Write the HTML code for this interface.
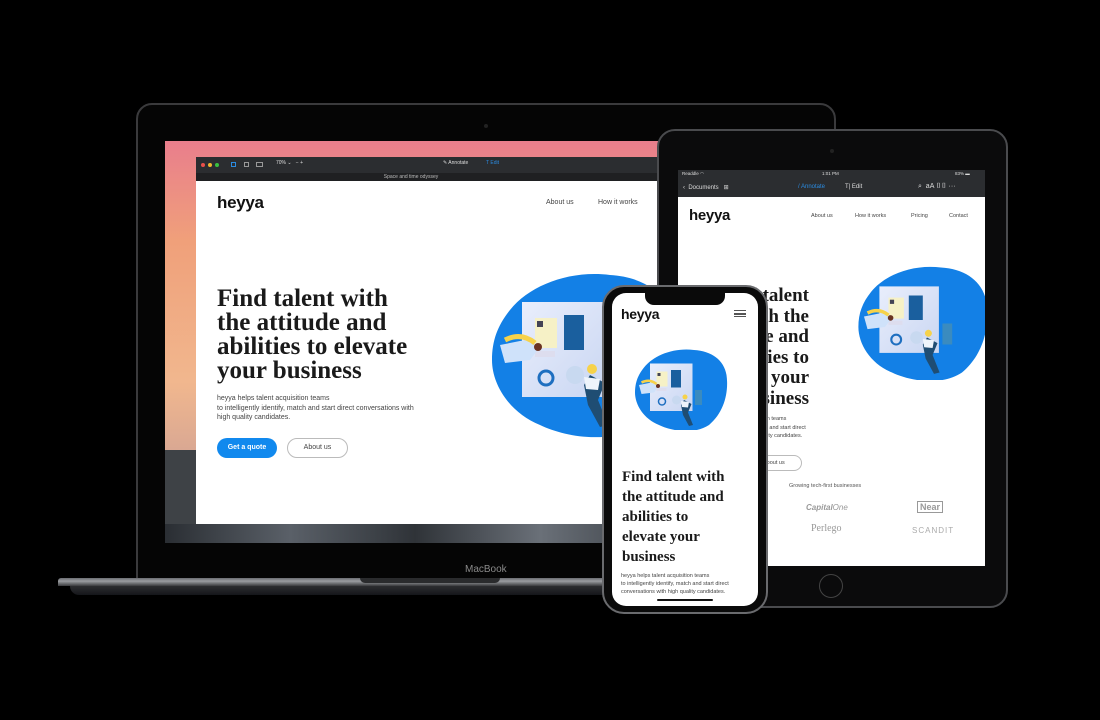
<!DOCTYPE html>
<html><head><meta charset="utf-8">
<style>
*{margin:0;padding:0;box-sizing:border-box}
body{width:1100px;height:720px;background:#000;position:relative;overflow:hidden;font-family:"Liberation Sans",sans-serif}
.a{position:absolute}
.serif{font-family:"Liberation Serif",serif;font-weight:bold;color:#1a1a1a}
.logo{font-family:"Liberation Sans",sans-serif;font-weight:bold;color:#111;letter-spacing:-0.3px}
.nav{font-size:7px;color:#444}
svg{display:block}
</style></head><body>
<svg width="0" height="0" style="position:absolute">
<defs>
<linearGradient id="pg" x1="0" y1="0" x2="1" y2="1"><stop offset="0" stop-color="#e9eefc"/><stop offset="1" stop-color="#c9d6f2"/></linearGradient>
<g id="ill">
<path d="M30 45 C50 20 90 5 130 10 C165 12 190 30 195 60 C200 95 190 135 160 160 C130 180 85 172 60 160 C30 148 12 120 12 95 C12 75 18 60 30 45Z" fill="#1380e6"/>
<rect x="42" y="37" width="85" height="95" fill="url(#pg)"/>
<rect x="55" y="53" width="22" height="30" fill="#f6f1c6"/>
<rect x="57" y="56" width="6" height="6" fill="#445"/>
<rect x="84" y="50" width="20" height="35" fill="#1a5f9e"/>
<rect x="55" y="86" width="20" height="6" fill="#dde"/>
<circle cx="66" cy="113" r="7" fill="none" stroke="#1e6fc0" stroke-width="3"/>
<circle cx="95" cy="110" r="9" fill="#c8d9f0"/>
<rect x="132" y="90" width="14" height="30" fill="#3a8bbf"/>
<path d="M20 80 L45 75 L60 82 L50 95 L25 98Z" fill="#cfe2fa"/>
<path d="M25 75 C35 70 45 70 55 78" stroke="#f6d24a" stroke-width="5" fill="none"/>
<circle cx="58" cy="82" r="4" fill="#6a3322"/>
<path d="M110 110 L125 118 L118 135 L128 160 L120 162 L108 140 L104 120Z" fill="#1f4d73"/>
<circle cx="112" cy="104" r="5" fill="#f6d24a"/>
<path d="M104 112 L120 114 L118 125 L106 124Z" fill="#eef4fb"/>
</g>
</defs></svg>

<!-- Laptop lid -->
<div class="a" style="left:136px;top:103px;width:700px;height:478px;border-radius:16px 16px 0 0;border:2px solid #3a3a3c;background:#050505"></div>
<div class="a" style="left:484px;top:124px;width:4px;height:4px;border-radius:50%;background:#222"></div>
<!-- wallpaper -->
<div class="a" style="left:165px;top:141px;width:500px;height:402px;background:linear-gradient(180deg,#e97e8c 0%,#f0a07a 25%,#f1b78e 60%,#d8a793 78%,#30343a 80%,#454b52 100%)"></div>
<div class="a" style="left:165px;top:450px;width:32px;height:93px;background:#3e4246"></div>
<div class="a" style="left:165px;top:524px;width:500px;height:19px;background:linear-gradient(90deg,#2a2e33,#5a6068,#2f3338,#6a7078,#3a3f45)"></div>
<!-- app window -->
<div class="a" style="left:196px;top:157px;width:470px;height:16px;background:#2b2d30"></div>
<div class="a" style="left:196px;top:173px;width:470px;height:8px;background:#1f2022;color:#bbb;font-size:5px;text-align:center;line-height:8px;padding-right:40px">Space and time odyssey</div>
<div class="a" style="left:201px;top:163px;width:4px;height:4px;border-radius:50%;background:#e9504a"></div>
<div class="a" style="left:208px;top:163px;width:4px;height:4px;border-radius:50%;background:#f1b62e"></div>
<div class="a" style="left:215px;top:163px;width:4px;height:4px;border-radius:50%;background:#39c13f"></div>
<div class="a" style="left:231px;top:162px;width:5px;height:5px;border:1px solid #2b8be0"></div>
<div class="a" style="left:244px;top:162px;width:5px;height:5px;border:1px solid #999"></div>
<div class="a" style="left:256px;top:162px;width:7px;height:5px;border:1px solid #999"></div>
<div class="a" style="left:276px;top:160px;font-size:5px;color:#ddd">70% ⌄ &nbsp; − +</div>
<div class="a" style="left:443px;top:160px;font-size:5px;color:#ddd">✎ Annotate</div>
<div class="a" style="left:486px;top:160px;font-size:5px;color:#2b8be0">T Edit</div>
<div class="a" style="left:196px;top:181px;width:470px;height:343px;background:#fff"></div>
<div class="a logo" style="left:217px;top:193px;font-size:17px">heyya</div>
<div class="a nav" style="left:546px;top:199px">About us</div>
<div class="a nav" style="left:598px;top:199px">How it works</div>
<div class="a serif" style="left:217px;top:287px;font-size:25px;line-height:24px;white-space:nowrap">Find talent with<br>the attitude and<br>abilities to elevate<br>your business</div>
<div class="a" style="left:217px;top:394px;font-size:7px;line-height:9.5px;color:#444;white-space:nowrap">heyya helps talent acquisition teams<br>to intelligently identify, match and start direct conversations with<br>high quality candidates.</div>
<div class="a" style="left:217px;top:438px;width:60px;height:20px;border-radius:10px;background:#1189ee;color:#fff;font-size:7px;font-weight:bold;text-align:center;line-height:20px">Get a quote</div>
<div class="a" style="left:287px;top:438px;width:61px;height:20px;border-radius:10px;border:1px solid #bbb;color:#444;font-size:7px;text-align:center;line-height:18px">About us</div>
<svg class="a" style="left:480px;top:265px" width="186" height="180" viewBox="0 0 186 180"><use href="#ill"/></svg>
<!-- laptop base -->
<div class="a" style="left:58px;top:578px;width:900px;height:8px;background:linear-gradient(180deg,#6b6d72,#9a9ca0 40%,#3a3b3e);border-radius:3px 3px 0 0"></div>
<div class="a" style="left:360px;top:578px;width:140px;height:5px;background:#2a2b2d;border-radius:0 0 6px 6px"></div>
<div class="a" style="left:70px;top:586px;width:880px;height:9px;background:linear-gradient(180deg,#2c2d30,#15161a);border-radius:0 0 40px 40px"></div>
<div class="a" style="left:465px;top:564px;font-size:10px;color:#8a8a8a">MacBook</div>

<!-- iPad -->
<div class="a" style="left:657px;top:129px;width:351px;height:479px;border-radius:18px;background:#0b0b0c;border:2px solid #4a4b4e"></div>
<div class="a" style="left:830px;top:149px;width:4px;height:4px;border-radius:50%;background:#222"></div>
<div class="a" style="left:819px;top:574px;width:24px;height:24px;border-radius:50%;border:1.5px solid #444"></div>
<div class="a" style="left:678px;top:170px;width:307px;height:27px;background:#2b2d30"></div>
<div class="a" style="left:682px;top:171px;font-size:4.5px;color:#ddd">Readdle ◠</div>
<div class="a" style="left:822px;top:171px;font-size:4.5px;color:#ddd">1:01 PM</div>
<div class="a" style="left:955px;top:171px;font-size:4.5px;color:#ddd">83% ▬</div>
<div class="a" style="left:683px;top:184px;font-size:6px;color:#ddd">‹ &nbsp;Documents &nbsp;&nbsp;⊞</div>
<div class="a" style="left:798px;top:184px;font-size:6px;color:#2b8be0">/ Annotate</div>
<div class="a" style="left:845px;top:184px;font-size:6px;color:#ddd">T| Edit</div>
<div class="a" style="left:918px;top:183px;font-size:7px;color:#ddd">⌕ &nbsp;aA ▯▯ ···</div>
<div class="a" style="left:678px;top:197px;width:307px;height:369px;background:#fff;overflow:hidden">
 <div class="a logo" style="left:11px;top:10px;font-size:15px">heyya</div>
 <div class="a nav" style="left:133px;top:16px;font-size:5.5px">About us</div>
 <div class="a nav" style="left:177px;top:16px;font-size:5.5px">How it works</div>
 <div class="a nav" style="left:233px;top:16px;font-size:5.5px">Pricing</div>
 <div class="a nav" style="left:271px;top:16px;font-size:5.5px">Contact</div>
 <svg class="a" style="left:172px;top:63px" width="140" height="120" viewBox="0 0 200 170"><use href="#ill"/></svg>
 <div class="a serif" style="left:36px;top:89px;font-size:19px;line-height:20.5px;white-space:nowrap;text-align:right;width:95px;direction:rtl"><span style="direction:ltr;unicode-bidi:embed">Find talent<br>with the<br>attitude and<br>abilities to<br>elevate your<br>business</span></div>
 <div class="a" style="left:20px;top:218px;font-size:5.5px;line-height:8.5px;color:#444;white-space:nowrap">heyya helps talent acquisition teams<br>to intelligently identify, match and start direct<br>conversations with high quality candidates.</div>
 <div class="a" style="left:50px;top:258px;width:74px;height:16px;border-radius:8px;border:1px solid #bbb;font-size:5.5px;color:#444;line-height:14px;padding-left:34px">About us</div>
 <div class="a" style="left:111px;top:286px;font-size:5.5px;color:#555">Growing tech-first businesses</div>
 <div class="a" style="left:128px;top:306px;font-size:8px;font-style:italic;font-weight:bold;color:#999">Capital<i style="font-weight:normal">One</i></div>
 <div class="a" style="left:239px;top:304px;font-size:9px;font-weight:bold;color:#999;border:1px solid #999;padding:0 2px">Near</div>
 <div class="a" style="left:133px;top:326px;font-size:10px;font-family:'Liberation Serif',serif;color:#999">Perlego</div>
 <div class="a" style="left:234px;top:329px;font-size:8px;letter-spacing:1px;color:#aaa">SCANDIT</div>
</div>

<!-- Phone -->
<div class="a" style="left:602px;top:285px;width:166px;height:329px;border-radius:22px;background:#0a0a0a;border:2px solid #6a6b6e"></div>
<div class="a" style="left:612px;top:293px;width:146px;height:313px;border-radius:14px;background:#fff;overflow:hidden">
 <div class="a" style="left:33px;top:-1px;width:80px;height:13px;background:#0a0a0a;border-radius:0 0 9px 9px"></div>
 <div class="a logo" style="left:9px;top:13px;font-size:14px">heyya</div>
 <div class="a" style="left:122px;top:17px;width:12px;height:7px;border-top:1.5px solid #555;border-bottom:1.5px solid #555"></div>
 <div class="a" style="left:122px;top:20px;width:12px;height:1.5px;background:#555"></div>
 <svg class="a" style="left:17px;top:52px" width="100" height="85" viewBox="0 0 200 170"><use href="#ill"/></svg>
 <div class="a serif" style="left:10px;top:174px;font-size:15px;line-height:20px;white-space:nowrap">Find talent with<br>the attitude and<br>abilities to<br>elevate your<br>business</div>
 <div class="a" style="left:9px;top:279px;font-size:5.5px;line-height:8px;color:#444;white-space:nowrap">heyya helps talent acquisition teams<br>to intelligently identify, match and start direct<br>conversations with high quality candidates.</div>
 <div class="a" style="left:45px;top:306px;width:56px;height:2px;border-radius:1px;background:#111"></div>
</div>
</body></html>
